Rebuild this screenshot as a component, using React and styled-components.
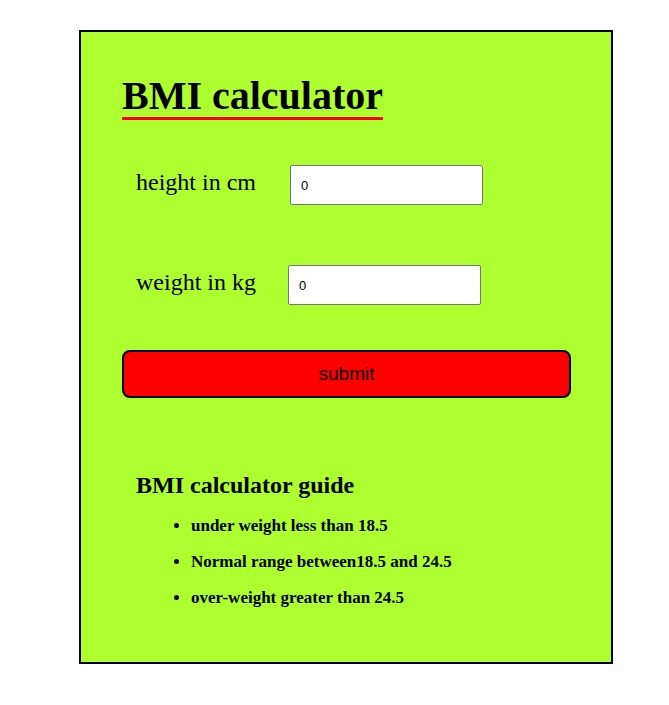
import styled, { createGlobalStyle } from "styled-components";
import React, { useState } from "react";

const GlobalStyle = createGlobalStyle`
    body {
        margin: 0;
        background: #ffffff;
        font-family: "Liberation Serif", "Times New Roman", serif;
    }
`;

function App() {
    const [height, setHeight] = useState("0");
    const [weight, setWeight] = useState("0");

    return (
        <>
            <GlobalStyle />
            <Card>
                <Title>BMI calculator</Title>

                <Row $top={45}>
                    <Label htmlFor="height" $gap={34}>height in cm</Label>
                    <Input type="text" id="height" value={height} onChange={({ target: { value } }) => setHeight(value)} />
                </Row>
                <Row $top={60}>
                    <Label htmlFor="weight" $gap={32}>weight in kg</Label>
                    <Input type="text" id="weight" value={weight} onChange={({ target: { value } }) => setWeight(value)} />
                </Row>

                <SubmitButton type="button">submit</SubmitButton>

                <GuideTitle>BMI calculator guide</GuideTitle>
                <GuideList>
                    <GuideItem>under weight less than 18.5</GuideItem>
                    <GuideItem>Normal range between18.5 and 24.5</GuideItem>
                    <GuideItem>over-weight greater than 24.5</GuideItem>
                </GuideList>
            </Card>
        </>
    );
}

const Card = styled.div`
    display: flex;
    flex-direction: column;
    box-sizing: border-box;
    width: 534px;
    height: 634px;
    margin: 30px 0 0 79px;
    padding: 43px 41px 0;
    border: 2px solid #000000;
    background: #adff2f;
`;

const Title = styled.h1`
    align-self: flex-start;
    margin: 0;
    font-size: 40px;
    font-weight: 700;
    line-height: 42px;
    color: #000000;
    border-bottom: 3px solid #ff0000;
`;

const Row = styled.div`
    display: flex;
    align-items: baseline;
    margin-top: ${({ $top }) => $top}px;
    padding-left: 14px;
`;

const Label = styled.label`
    font-size: 24px;
    margin-right: ${({ $gap }) => $gap}px;
    color: #000000;
`;

const Input = styled.input`
    box-sizing: border-box;
    width: 193px;
    height: 40px;
    padding: 0 10px;
    border: 1px solid #767676;
    border-radius: 2px;
    outline: none;
    background: #ffffff;
    font-family: "Liberation Sans", Arial, sans-serif;
    font-size: 13px;
    color: #000000;
`;

const SubmitButton = styled.button`
    box-sizing: border-box;
    width: 449px;
    height: 48px;
    margin-top: 45px;
    border: 2px solid #000000;
    border-radius: 8px;
    background: #ff0000;
    font-family: "Liberation Sans", Arial, sans-serif;
    font-size: 19px;
    color: #000000;
    cursor: pointer;
`;

const GuideTitle = styled.h3`
    margin: 74px 0 0;
    padding-left: 14px;
    font-size: 24px;
    font-weight: 700;
`;

const GuideList = styled.ul`
    margin: 18px 0 0 29px;
    padding-left: 40px;
`;

const GuideItem = styled.li`
    font-size: 17px;
    font-weight: 700;
    line-height: 18px;
    margin-bottom: 18px;
`;

export default App;
